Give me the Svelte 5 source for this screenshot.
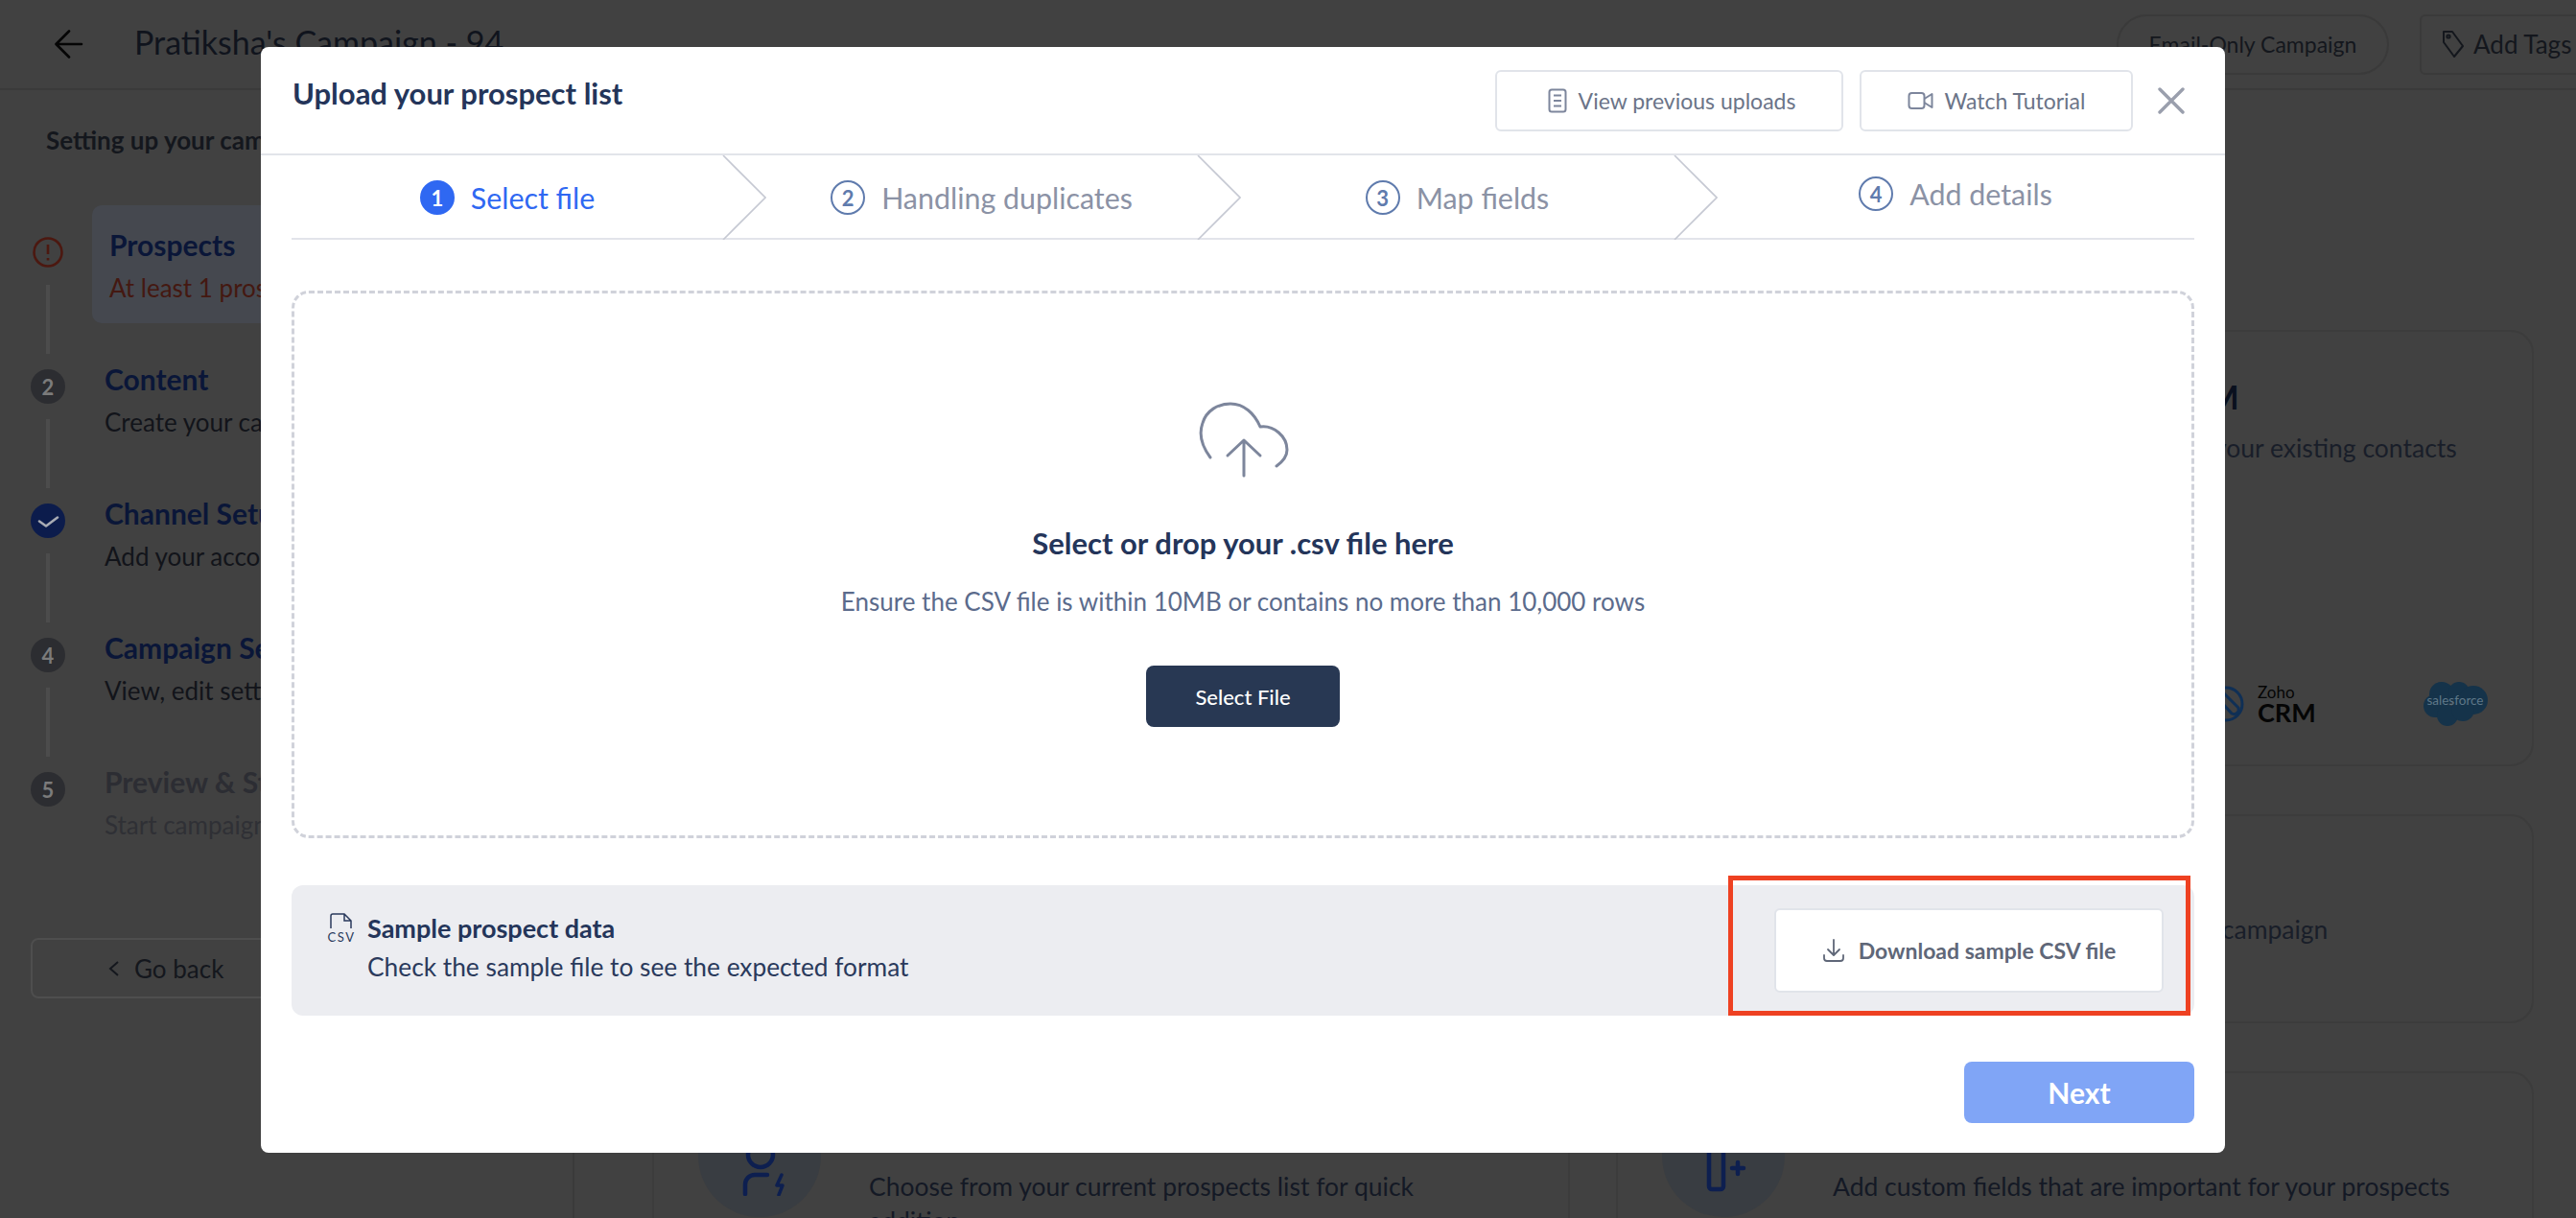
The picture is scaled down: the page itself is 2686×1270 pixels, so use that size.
<script>
  const steps = [
    { n: 1, title: "Prospects", sub: "At least 1 prospect is required", state: "error" },
    { n: 2, title: "Content", sub: "Create your campaign sequence", state: "todo" },
    { n: 3, title: "Channel Setup", sub: "Add your accounts to send from", state: "done" },
    { n: 4, title: "Campaign Settings", sub: "View, edit settings for campaign", state: "todo" },
    { n: 5, title: "Preview & Start", sub: "Start campaign after preview", state: "off" }
  ];
  const wizard = [
    { n: 1, label: "Select file", cls: "active" },
    { n: 2, label: "Handling duplicates", cls: "" },
    { n: 3, label: "Map fields", cls: "" },
    { n: 4, label: "Add details", cls: "last" }
  ];
</script>

<div class="page">
  <header class="topbar">
    <svg class="back" width="30" height="30" viewBox="0 0 30 30" fill="none" stroke="#050505" stroke-width="2.6" stroke-linecap="round" stroke-linejoin="round"><path d="M28 15H2M15 1.5 1.5 15 15 28.5" /></svg>
    <span class="camp">Pratiksha's Campaign - 94</span>
    <span class="pill">Email-Only Campaign</span>
    <span class="tags">
      <svg width="26" height="32" viewBox="0 0 26 32" fill="none" stroke="#14171d" stroke-width="2"><path d="M3 3h9l11 15-9 11L3 14z" stroke-linejoin="round" /><circle cx="8" cy="8" r="1.6" /></svg>
      Add Tags
    </span>
  </header>

  <div class="body">
    <aside class="side">
      <h3>Setting up your campaign</h3>
      <ul>
        {#each steps as s, i}
          <li class="row {s.state}">
            <div class="marker">
              {#if s.state === "error"}
                <svg width="36" height="36" viewBox="0 0 36 36" fill="none" stroke="#4c1810" stroke-width="2.6"><circle cx="18" cy="18" r="14.5" /><path d="M18 10v10M18 24v2.5" /></svg>
              {:else if s.state === "done"}
                <svg width="36" height="36" viewBox="0 0 36 36"><circle cx="18" cy="18" r="18" fill="#0c1c4c" /><path d="M9 18.5l7 5 12-9" fill="none" stroke="#a8abb3" stroke-width="2.6" stroke-linecap="round" stroke-linejoin="round" /></svg>
              {:else}
                <span class="num">{s.n}</span>
              {/if}
              {#if i < steps.length - 1}<span class="conn"></span>{/if}
            </div>
            <div class="txt">
              <b>{s.title}</b>
              <p>{s.sub}</p>
            </div>
          </li>
        {/each}
      </ul>
      <div class="goback">
        <svg width="14" height="18" viewBox="0 0 14 18" fill="none" stroke="#14171d" stroke-width="2"><path d="M11 2 3 9l8 7" /></svg>
        Go back
      </div>
    </aside>

    <main class="cards">
      <section class="card"></section>
      <section class="card crm">
        <h4>Import prospects from CRM</h4>
        <p>Import from your CRM to sync up your existing contacts</p>
        <div class="logos">
          <span class="zoho">
            <svg width="44" height="40" viewBox="0 0 44 40" fill="none" stroke="#0f2f55" stroke-width="3"><circle cx="20" cy="20" r="17" /><path d="M8 10l18 20a5 5 0 0 0 7-6L17 8" /></svg>
            <span class="zoho-t"><small>Zoho</small>CRM</span>
          </span>
          <svg class="sf" width="68" height="48" viewBox="0 0 68 48">
            <g fill="#15334a"><circle cx="20" cy="14" r="13" /><circle cx="38" cy="12" r="11" /><circle cx="53" cy="20" r="15" /><circle cx="13" cy="26" r="12" /><circle cx="26" cy="36" r="11" /><circle cx="42" cy="30" r="12" /></g>
            <text x="34" y="25" text-anchor="middle" class="sf-t">salesforce</text>
          </svg>
        </div>
      </section>
      <section class="card"></section>
      <section class="card mid"><p>Add all prospects manually to your campaign</p></section>
      <section class="card low">
        <span class="circle">
          <svg width="60" height="84" viewBox="0 0 60 84" fill="none" stroke="#0d1f50" stroke-width="4.5" stroke-linecap="round" stroke-linejoin="round"><circle cx="31" cy="41" r="13" /><path d="M15 82V72a10 10 0 0 1 10-10h13" /><path d="M53 62l-5 11h6l-4 10" stroke-width="3.5" /></svg>
        </span>
        <p>Choose from your current prospects list for quick addition</p>
      </section>
      <section class="card low">
        <span class="circle">
          <svg width="60" height="84" viewBox="0 0 60 84" fill="none" stroke="#0d1f50" stroke-width="4.5" stroke-linecap="round"><rect x="15" y="22" width="15" height="55" rx="3" /><path d="M45 49v12M39 55h12" /></svg>
        </span>
        <p>Add custom fields that are important for your prospects</p>
      </section>
    </main>
  </div>

  <div class="modal">
    <div class="m-head">
      <h2>Upload your prospect list</h2>
      <button class="ghost prev">
        <svg width="20" height="26" viewBox="0 0 20 26" fill="none" stroke="#7d869c" stroke-width="2"><rect x="1.5" y="1.5" width="17" height="23" rx="2.5" /><path d="M6 7.5h8M6 13h8M6 18.5h8" /></svg>
        View previous uploads
      </button>
      <button class="ghost watch">
        <svg width="27" height="20" viewBox="0 0 27 20" fill="none" stroke="#7d869c" stroke-width="2" stroke-linejoin="round"><rect x="1.5" y="2" width="16" height="16" rx="3" /><path d="M17.5 8l8-5v14l-8-5" /></svg>
        Watch Tutorial
      </button>
      <svg class="close" width="30" height="28" viewBox="0 0 30 28" stroke="#9a9fad" stroke-width="3.4" stroke-linecap="round"><path d="M3 2l24 24M27 2 3 26" /></svg>
    </div>

    <div class="wizard">
      {#each wizard as w}
        <div class="wstep {w.cls}">
          <span class="wn">{w.n}</span>
          <span>{w.label}</span>
          {#if w.cls !== "last"}
            <svg class="chev" width="46" height="88" viewBox="0 0 46 88" fill="none" stroke="#c6c9d3" stroke-width="1.6"><path d="M1 0 45 44 1 88" /></svg>
          {/if}
        </div>
      {/each}
    </div>

    <div class="drop">
      <svg class="cloud" width="94" height="82" viewBox="0 0 94 82" fill="none" stroke="#7d869c" stroke-width="3" stroke-linecap="round" stroke-linejoin="round">
        <path d="M12 60C3 48 0 35 4 24 8 11 20 4 33 4c14 0 25 10 31 24 14-2 28 10 28 24 0 6-4 12-11 17" />
        <path d="M47 79V42M30 58l17-16 17 16" />
      </svg>
      <h3>Select or drop your .csv file here</h3>
      <p>Ensure the CSV file is within 10MB or contains no more than 10,000 rows</p>
      <button class="pick">Select File</button>
    </div>

    <div class="sample">
      <svg class="csv" width="30" height="30" viewBox="0 0 30 30" fill="none" stroke="#2a3a5c" stroke-width="1.5">
        <path d="M4 16V3a2 2 0 0 1 2-2H18l7 7v8M18 1v7h7" />
        <text x="15" y="29.5" text-anchor="middle" class="csv-t">CSV</text>
      </svg>
      <div class="s-txt">
        <b>Sample prospect data</b>
        <p>Check the sample file to see the expected format</p>
      </div>
      <button class="dl">
        <svg width="24" height="24" viewBox="0 0 24 24" fill="none" stroke="#5f6778" stroke-width="1.8" stroke-linecap="round" stroke-linejoin="round"><path d="M12 1v15M6 11l6 6 6-6M2 17v3a3 3 0 0 0 3 3h14a3 3 0 0 0 3-3v-3" /></svg>
        Download sample CSV file
      </button>
    </div>

    <div class="m-foot"><button class="next">Next</button></div>
    <div class="mark"></div>
  </div>
</div>

<style>
  :global(body) { margin: 0; }
  .page {
    position: relative;
    width: 2686px;
    height: 1270px;
    overflow: hidden;
    background: #414141;
    font-family: "Lato", "Noto Sans", sans-serif;
    color: #14171d;
  }
  p, h2, h3, h4, ul { margin: 0; padding: 0; }
  button { font-family: inherit; cursor: pointer; }

  .topbar {
    display: flex;
    align-items: center;
    height: 92px;
    border-bottom: 2px solid #3a3a3a;
    padding: 0 0 0 57px;
  }
  .camp { margin-left: 53px; padding-bottom: 5px; font-size: 34px; color: #10141d; }
  .pill {
    margin-left: auto;
    width: 284px;
    height: 63px;
    box-sizing: border-box;
    border: 2px solid #3a3a3a;
    border-radius: 32px;
    display: flex;
    align-items: center;
    justify-content: center;
    font-size: 23px;
  }
  .tags {
    margin: 0 -60px 0 32px;
    width: 223px;
    height: 63px;
    box-sizing: border-box;
    border: 2px solid #3a3a3a;
    border-radius: 6px;
    display: flex;
    align-items: center;
    gap: 8px;
    padding-left: 20px;
    font-size: 26px;
    flex: none;
  }

  .body { display: flex; height: 1176px; }
  .side { border-right: 2px solid #3a3a3a; flex: none; padding-left: 32px; width: 565px; }
  .side h3 { margin-top: 37px; margin-left: 16px; font-size: 26px; line-height: 30px; font-weight: 700; color: #14171d; }
  .side ul { list-style: none; margin-top: 76px; }
  .row { display: flex; height: 140px; }
  .marker { width: 36px; display: flex; flex-direction: column; align-items: center; padding-top: 8px; flex: none; }
  .num {
    width: 36px; height: 36px; border-radius: 50%;
    background: #2c2d31; color: #7b7b7b;
    font-size: 22px; font-weight: 700;
    display: flex; align-items: center; justify-content: center;
  }
  .marker svg { display: block; }
  .conn { width: 4px; height: 72px; background: #4c4c4c; margin-top: 16px; }
  .txt { margin-left: 41px; }
  .txt b { display: block; font-size: 30px; line-height: 36px; color: #0a1638; }
  .txt p { margin-top: 9px; font-size: 26px; line-height: 36px; color: #12141a; white-space: nowrap; }
  .error .txt { background: #45484f; margin: -23px 0 0 28px; padding: 23px 40px 0 18px; height: 100px; border-radius: 10px; }
  .error .txt p { color: #441811; }
  .off .txt b { color: #2c2d33; }
  .off .txt p { color: #2f3035; }
  .goback {
    margin-top: 41px;
    width: 270px;
    height: 63px;
    box-sizing: border-box;
    border: 2px solid #4e4e4e;
    border-radius: 8px;
    display: flex;
    align-items: center;
    gap: 14px;
    padding-left: 78px;
    font-size: 26px;
  }

  .cards {
    flex: none;
    display: grid;
    grid-template-columns: 957px 957px;
    grid-template-rows: 455px 218px 269px;
    column-gap: 48px;
    row-gap: 50px;
    margin-left: 81px;
    padding-top: 250px;
  }
  .card { border: 2px solid #3c3c3c; border-radius: 24px; box-sizing: border-box; position: relative; padding: 0 24px 0 224px; }
  .crm h4 { font-size: 34px; line-height: 40px; margin-top: 48px; color: #0a101e; white-space: nowrap; }
  .crm p { font-size: 26.5px; line-height: 36px; margin-top: 15px; color: #191e29; white-space: nowrap; }
  .logos { display: flex; align-items: center; margin-top: 225px; margin-left: 390px; }
  .zoho { display: flex; align-items: center; gap: 9px; }
  .zoho-t { display: flex; flex-direction: column; font-size: 27px; line-height: 24px; color: #050505; font-weight: 700; }
  .zoho-t small { font-size: 17px; line-height: 18px; font-weight: 400; }
  .sf { margin-left: 111px; }
  .sf-t { font-size: 13.5px; fill: #5f7888; font-family: "Lato", sans-serif; }
  .mid p { font-size: 26.5px; line-height: 36px; margin-top: 100px; color: #191e29; white-space: nowrap; }
  .low p { font-size: 26.5px; line-height: 36px; margin-top: 100px; color: #141925; max-width: 655px; }
  .circle {
    position: absolute; left: 46px; top: 22px;
    width: 128px; height: 128px; border-radius: 50%;
    background: #393d42;
    display: flex; align-items: center; justify-content: center;
  }

  .modal {
    position: absolute;
    left: 272px;
    top: 49px;
    width: 2048px;
    height: 1153px;
    box-sizing: border-box;
    background: #fff;
    border-radius: 8px;
    padding: 0 32px;
  }
  .m-head {
    display: flex;
    align-items: center;
    height: 111px;
    margin: 0 -32px;
    padding: 0 41px 0 33px;
    border-bottom: 2px solid #e2e4ea;
    gap: 17px;
  }
  .m-head h2 { margin-right: auto; font-size: 31px; font-weight: 700; color: #24355a; position: relative; top: -8px; }
  .ghost {
    height: 64px;
    background: #fff;
    border: 2px solid #e1e4ea;
    border-radius: 6px;
    color: #6b7488;
    font-size: 23px;
    display: flex;
    align-items: center;
    justify-content: center;
    gap: 12px;
    padding: 0;
    flex: none;
  }
  .prev { width: 363px; padding-left: 5px; }
  .watch { width: 285px; }
  .close { margin-left: 8px; flex: none; }

  .wizard {
    display: grid;
    grid-template-columns: 450px 495px 497px 542px;
    height: 88px;
    box-sizing: border-box;
    border-bottom: 2px solid #e2e4ea;
  }
  .wstep {
    position: relative;
    display: flex;
    align-items: center;
    justify-content: center;
    gap: 17px;
    padding-left: 44px;
    font-size: 30.4px;
    color: #8b92a5;
    height: 88px;
  }
  .wstep:first-child { padding-left: 0; }
  .wn {
    width: 36px; height: 36px;
    box-sizing: border-box;
    border: 2px solid #5f7bad;
    border-radius: 50%;
    color: #5f7bad;
    font-size: 22px;
    font-weight: 700;
    display: flex; align-items: center; justify-content: center;
    flex: none;
  }
  .active { color: #2f68f2; }
  .active .wn { background: #2f68f2; border-color: #2f68f2; color: #fff; }
  .last { padding-bottom: 8px; box-sizing: border-box; }
  .chev { position: absolute; right: -45px; top: 0; z-index: 1; }

  .drop {
    margin-top: 53px;
    height: 571px;
    box-sizing: border-box;
    border: 3px dashed #d0d2da;
    border-radius: 18px;
    display: flex;
    flex-direction: column;
    align-items: center;
    padding-top: 111px;
  }
  .cloud { margin-left: 1px; }
  .drop h3 { margin-top: 47px; font-size: 31px; line-height: 40px; font-weight: 700; color: #24355a; }
  .drop p { margin-top: 21px; font-size: 26px; line-height: 40px; color: #5b6b8c; }
  .pick {
    margin-top: 47px;
    width: 202px;
    height: 64px;
    background: #283853;
    color: #fff;
    border: 0;
    border-radius: 8px;
    font-size: 22px;
    font-weight: 500;
  }

  .sample {
    margin-top: 49px;
    height: 136px;
    background: #ecedf1;
    border-radius: 12px;
    display: flex;
    align-items: center;
    padding: 0 32px 0 37px;
  }
  .csv { align-self: flex-start; margin-top: 29px; overflow: visible; flex: none; }
  .csv-t { font-size: 13px; letter-spacing: 1.5px; fill: #2a3a5c; stroke: none; font-family: "Lato", sans-serif; }
  .s-txt { margin-left: 12px; padding-bottom: 6px; color: #2a3a5c; }
  .s-txt b { display: block; font-size: 27px; line-height: 36px; color: #24355a; }
  .s-txt p { margin-top: 4px; font-size: 26.3px; line-height: 36px; }
  .dl {
    margin-left: auto;
    width: 406px;
    height: 88px;
    background: #fff;
    border: 2px solid #e1e4ea;
    border-radius: 6px;
    color: #5f6778;
    font-size: 23px;
    font-weight: 700;
    display: flex;
    align-items: center;
    justify-content: center;
    gap: 14px;
    padding: 0;
  }

  .m-foot { display: flex; justify-content: flex-end; margin-top: 48px; }
  .next {
    width: 240px;
    height: 64px;
    background: #80a5f6;
    color: #fff;
    border: 0;
    border-radius: 8px;
    font-size: 30px;
    font-weight: 700;
  }
  .mark {
    position: absolute;
    left: 1530px;
    top: 864px;
    width: 482px;
    height: 146px;
    box-sizing: border-box;
    border: 5px solid #ee4122;
  }
</style>
